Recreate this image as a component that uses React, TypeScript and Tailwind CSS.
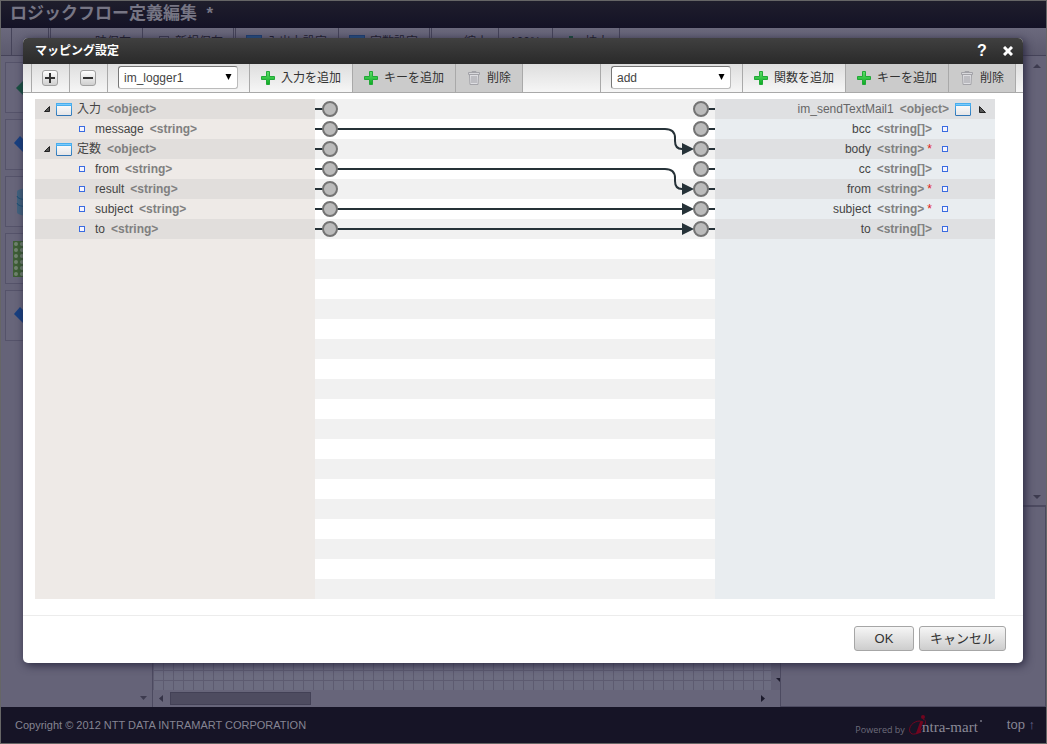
import type { ReactNode } from "react";

type Field = { name: string; type: string; object?: boolean; required?: boolean };

const inputs: Field[] = [
  { name: "入力", type: "<object>", object: true },
  { name: "message", type: "<string>" },
  { name: "定数", type: "<object>", object: true },
  { name: "from", type: "<string>" },
  { name: "result", type: "<string>" },
  { name: "subject", type: "<string>" },
  { name: "to", type: "<string>" },
];

const outputs: Field[] = [
  { name: "im_sendTextMail1", type: "<object>", object: true },
  { name: "bcc", type: "<string[]>" },
  { name: "body", type: "<string>", required: true },
  { name: "cc", type: "<string[]>" },
  { name: "from", type: "<string>", required: true },
  { name: "subject", type: "<string>", required: true },
  { name: "to", type: "<string[]>" },
];

const links = [
  { from: 1, to: 2 },
  { from: 3, to: 4 },
  { from: 5, to: 5 },
  { from: 6, to: 6 },
];

const rowY = (row: number) => row * 20 + 10;

function PlusIcon() {
  return (
    <svg width="14" height="14" viewBox="0 0 14 14" aria-hidden="true">
      <defs>
        <linearGradient id="plus" x1="0" y1="0" x2="0" y2="1">
          <stop offset="0" stopColor="#5fe06a" />
          <stop offset="1" stopColor="#0cab22" />
        </linearGradient>
      </defs>
      <path d="M5.5 .5h3v5h5v3h-5v5h-3v-5h-5v-3h5z" fill="url(#plus)" stroke="#22a838" />
    </svg>
  );
}

function TrashIcon() {
  return (
    <svg width="14" height="14" viewBox="-1 0 14 14" fill="none" stroke="#a3a3a8" aria-hidden="true">
      <path d="M4 1.500V.5h4v1" />
      <path d="M.5 1.500h11v2H.5z" fill="#d8d8dc" />
      <path d="M1.500 4l.5 9.500h8l.5-9.500" fill="#dedee2" />
      <path d="M4 5v7M6 5v7M8 5v7" stroke="#9c9ca2" />
    </svg>
  );
}

function WindowIcon() {
  return (
    <svg width="16" height="13" viewBox="0 0 16 13" className="shrink-0" aria-hidden="true">
      <defs>
        <linearGradient id="pane" x1="0" y1="0" x2="0" y2="1">
          <stop offset="0" stopColor="#ffffff" />
          <stop offset="1" stopColor="#e4e4e6" />
        </linearGradient>
        <linearGradient id="frame" x1="0" y1="0" x2="0" y2="1">
          <stop offset="0" stopColor="#4db4f2" />
          <stop offset="1" stopColor="#2f74b5" />
        </linearGradient>
      </defs>
      <rect x=".5" y=".5" width="15" height="12" rx=".5" fill="url(#pane)" stroke="url(#frame)" />
      <path d="M0 0h16v3H0z" fill="#48aeef" />
      <path d="M1 1.500h14" stroke="#7ccbfa" />
    </svg>
  );
}

function SquareButton({ label, plus }: { label: string; plus?: boolean }) {
  return (
    <div className="flex w-[38px] items-center justify-center border-l border-[#a9a9a9] pr-[2px]">
      <button
        aria-label={label}
        className="flex size-4 items-center justify-center rounded-[3px] border border-[#a0a0a0] bg-linear-to-b from-white to-[#cfcfcf]"
      >
        <svg width="12" height="12" viewBox="0 0 12 12" stroke="#333" strokeWidth="2" aria-hidden="true">
          <path d={plus ? "M1 6h10M6 1v10" : "M1 6h10"} />
        </svg>
      </button>
    </div>
  );
}

function ToolButton({ icon, children, disabled }: { icon: ReactNode; children: ReactNode; disabled?: boolean }) {
  return (
    <button
      disabled={disabled}
      className="flex items-center gap-[6px] border-l border-[#a9a9a9] px-[11px] text-xs text-[#333] disabled:bg-[#cbcbcb]"
    >
      {icon}
      {children}
    </button>
  );
}

function ToolSelect({ label, value }: { label: string; value: string }) {
  return (
    <div className="flex w-[142px] items-start border-l border-[#a9a9a9] pt-[2px] pl-[10px]">
      <div className="relative">
        <select
          aria-label={label}
          defaultValue={value}
          className="block h-[23px] w-[120px] appearance-none rounded-[3px] border border-[#bbb] border-t-[#777] border-l-[#777] bg-white px-[5px] text-xs text-[#444]"
        >
          <option>{value}</option>
        </select>
        <svg
          className="pointer-events-none absolute top-2 right-[6px]"
          width="7"
          height="6"
          viewBox="0 0 7 6"
          aria-hidden="true"
        >
          <path d="M.5 0h6L3.500 6z" fill="#000" />
        </svg>
      </div>
    </div>
  );
}

function Marker() {
  return <span className="size-[6px] shrink-0 border border-[#3a6be0] bg-[#f4f4ff]" />;
}

function InputRow({ field }: { field: Field }) {
  return (
    <li className="flex h-5 items-center odd:bg-[#e1dedc]">
      {field.object ? (
        <span className="flex w-[42px] items-center gap-[6px] pl-[9px]">
          <svg width="6" height="6" viewBox="0 0 6 6" aria-hidden="true">
            <path d="M.5 5.500h5v-5z" fill="#555" stroke="#222" />
          </svg>
          <WindowIcon />
        </span>
      ) : (
        <span className="flex w-[60px] pl-11">
          <Marker />
        </span>
      )}
      <span>{field.name}</span>
      <span className="pl-[6px] font-bold text-[#808080]">{field.type}</span>
    </li>
  );
}

function OutputRow({ field }: { field: Field }) {
  return (
    <li className="flex h-5 items-center justify-end odd:bg-[#dfe0e2]">
      <span className={field.object ? "text-[#666]" : ""}>{field.name}</span>
      <span className="pl-[6px] font-bold text-[#808080]">{field.type}</span>
      {field.required && <span className="pl-[3px] text-[#e02020]">*</span>}
      {field.object ? (
        <span className="flex items-center gap-2 pr-[9px] pl-[6px]">
          <WindowIcon />
          <svg width="7" height="7" viewBox="0 0 7 7" aria-hidden="true">
            <path d="M.5 .5v6h6z" fill="#555" stroke="#222" />
          </svg>
        </span>
      ) : (
        <span className="flex pr-[47px] pl-[10px]">
          <Marker />
        </span>
      )}
    </li>
  );
}

function Connections() {
  return (
    <svg className="block w-full" height="140" stroke="#263238" strokeWidth="2" fill="none" aria-hidden="true">
      {links.map(({ from }) => (
        <line key={from} x1="15" x2="87%" y1={rowY(from)} y2={rowY(from)} />
      ))}
      {inputs.map((_, row) => (
        <g key={row}>
          <path d={`M0 ${rowY(row)}h8`} />
          <circle cx="15" cy={rowY(row)} r="7" fill="#bbb" stroke="#747474" />
        </g>
      ))}
      <svg x="100%" y="0" overflow="visible">
        {links.map(({ from, to }) => {
          const a = rowY(from);
          const b = rowY(to);
          const bend = a === b ? "H-25" : `H-50Q-40 ${a} -40 ${a + 9}V${b - 8}Q-40 ${b} -33 ${b}H-25`;
          return (
            <g key={from}>
              <path d={`M-60 ${a}${bend}`} />
              <path d={`M-33 ${b - 6}L-21 ${b}L-33 ${b + 6}z`} fill="#263238" stroke="none" />
            </g>
          );
        })}
        {outputs.map((_, row) => (
          <g key={row}>
            <path d={`M-7 ${rowY(row)}H0`} />
            <circle cx="-14" cy={rowY(row)} r="7" fill="#bbb" stroke="#747474" />
          </g>
        ))}
      </svg>
    </svg>
  );
}

function MappingDialog() {
  return (
    <section
      role="dialog"
      aria-labelledby="mapping-title"
      className="overflow-hidden rounded-[5px] bg-white shadow-[2px_2px_10px_#29273f]"
    >
      <header className="flex h-[26px] items-center bg-linear-to-b from-[#404040] to-[#2a2a2a] pr-[7px] pl-3 text-white">
        <h2 id="mapping-title" className="flex-1 pb-px text-xs font-bold">
          マッピング設定
        </h2>
        <button aria-label="ヘルプ" className="w-5 text-base font-bold">
          ?
        </button>
        <button aria-label="閉じる" className="ml-2 flex w-4 justify-center">
          <svg width="10" height="10" viewBox="0 0 10 10" stroke="#fff" strokeWidth="3" aria-hidden="true">
            <path d="M1 1l8 8M9 1l-8 8" />
          </svg>
        </button>
      </header>
      <div className="flex h-[29px] justify-between border-b border-[#a9a9a9] bg-linear-to-b from-[#dedede] to-[#f6f6f6] pr-[7px] pl-2">
        <div className="flex">
          <SquareButton label="すべて展開" plus />
          <SquareButton label="すべて折りたたむ" />
          <ToolSelect label="入力" value="im_logger1" />
          <ToolButton icon={<PlusIcon />}>入力を追加</ToolButton>
          <ToolButton icon={<PlusIcon />} disabled>
            キーを追加
          </ToolButton>
          <ToolButton icon={<TrashIcon />} disabled>
            削除
          </ToolButton>
          <span className="border-l border-[#a9a9a9]" />
        </div>
        <div className="flex">
          <ToolSelect label="関数" value="add" />
          <ToolButton icon={<PlusIcon />}>関数を追加</ToolButton>
          <ToolButton icon={<PlusIcon />} disabled>
            キーを追加
          </ToolButton>
          <ToolButton icon={<TrashIcon />} disabled>
            削除
          </ToolButton>
          <span className="border-l border-[#a9a9a9]" />
        </div>
      </div>
      <div className="grid min-h-[500px] grid-cols-[7fr_10fr_7fr] pt-[6px] pr-7 pb-4 pl-3 text-xs text-[#444]">
        <ul className="bg-[#eeeae7]">
          {inputs.map((field) => (
            <InputRow key={field.name} field={field} />
          ))}
        </ul>
        <div className="h-[500px] bg-[repeating-linear-gradient(#f1f1f1_0_20px,#fff_20px_40px)]">
          <Connections />
        </div>
        <ul className="bg-[#e9edf0]">
          {outputs.map((field) => (
            <OutputRow key={field.name} field={field} />
          ))}
        </ul>
      </div>
      <footer className="flex h-12 items-start justify-end gap-[5px] border-t border-[#ececec] pt-[10px] pr-[17px] text-[13px] text-[#333]">
        <button className="h-[25px] w-[60px] rounded-[3px] border border-[#a6a6a6] bg-linear-to-b from-[#f6f6f6] to-[#cdcdcd]">
          OK
        </button>
        <button className="h-[25px] w-[87px] rounded-[3px] border border-[#a6a6a6] bg-linear-to-b from-[#f6f6f6] to-[#cdcdcd]">
          キャンセル
        </button>
      </footer>
    </section>
  );
}

function BackTool({ className, label, icon }: { className: string; label?: string; icon?: ReactNode }) {
  return (
    <div className={`flex items-center border-l border-[#454359] ${className}`}>
      {icon}
      {label}
    </div>
  );
}

function BlueBox() {
  return <span className="mr-[5px] h-[13px] w-4 border border-[#1d3f72] bg-[#245083]" />;
}

function GroupEnd() {
  return <span className="w-[2px] border-l border-[#454359]" />;
}

function PaletteTile({ children }: { children: ReactNode }) {
  return (
    <div className="flex h-[51px] w-[51px] items-center justify-center border border-[#55536a] bg-[#67657a]">
      <svg width="36" height="38" viewBox="0 0 36 38" aria-hidden="true">
        {children}
      </svg>
    </div>
  );
}

function Backdrop() {
  return (
    <div className="flex min-h-screen flex-col border border-[#666] bg-[#656378] text-[#8f8e99]">
      <header className="flex h-[27px] items-center bg-linear-to-b from-[#1f1e2c] to-[#141226] pl-[9px]">
        <h1 className="pb-[2px] text-[17px] font-bold text-[#767584]">ロジックフロー定義編集&nbsp; *</h1>
      </header>
      <div className="flex h-7 border-b border-[#454359] bg-linear-to-b from-[#6b697d] to-[#5c5a6e] pl-[10px] text-xs text-[#1c1a2c]">
        <BackTool className="w-[37px]" />
        <GroupEnd />
        <BackTool className="w-[92px] pl-8" label="一時保存" />
        <BackTool
          className="w-[91px] pl-4"
          label="新規保存"
          icon={<span className="mr-[6px] h-3 w-[10px] border border-[#3b3950]" />}
        />
        <GroupEnd />
        <BackTool className="w-[103px] pl-[10px]" label="入出力設定" icon={<BlueBox />} />
        <BackTool className="w-[91px] pl-[10px]" label="定数設定" icon={<BlueBox />} />
        <GroupEnd />
        <BackTool className="w-[67px] pl-8" label="縮小" />
        <BackTool className="w-[54px] pl-[11px]" label="100%" />
        <BackTool
          className="w-[67px] pl-4"
          label="拡大"
          icon={<span className="mr-[12px] h-3 w-1 bg-[#174b3b]" />}
        />
        <span className="border-l border-[#454359]" />
      </div>
      <div className="flex flex-1">
        <aside className="flex w-[152px] items-end justify-between border-r border-[#4c4a60] pl-1">
          <div className="flex flex-col gap-[6px] self-start pt-[6px]">
            <PaletteTile>
              <path d="M3 19L16 6l13 13-13 13z" fill="#17503f" />
            </PaletteTile>
            <PaletteTile>
              <path d="M1 17l6-7 20 20-7 6z" fill="#173f80" />
            </PaletteTile>
            <PaletteTile>
              <path d="M4 9v20c0 5 22 5 22 0V9c0-5-22-5-22 0" fill="#41627e" />
              <path d="M4 13c0 5 22 5 22 0M4 20c0 5 22 5 22 0" stroke="#194f74" fill="none" />
            </PaletteTile>
            <PaletteTile>
              <path d="M0 1h36v36H0z" fill="#3d5e34" />
              <path
                d="M3 4h30M3 10h30M3 16h30M3 22h30M3 28h30M3 34h30"
                stroke="#71836f"
                strokeWidth="4"
                strokeLinecap="round"
                strokeDasharray="0 6"
              />
            </PaletteTile>
            <PaletteTile>
              <path d="M1 17l6-7 20 20-7 6z" fill="#173f80" />
            </PaletteTile>
          </div>
          <svg width="7" height="4" viewBox="0 0 7 4" className="mr-[5px] mb-[7px]" aria-hidden="true">
            <path d="M0 0h7L3.500 4z" fill="#3d3b4f" />
          </svg>
        </aside>
        <main className="flex flex-1 flex-col">
          <div className="flex flex-1">
            <div className="flex-1 bg-[#6c6c80] bg-[linear-gradient(#5d5b70_1px,transparent_1px),linear-gradient(90deg,#5d5b70_1px,transparent_1px)] bg-size-[10px_10px] bg-position-[0_4px]" />
            <div className="flex w-[9px] items-end bg-[#626075] pb-2">
              <svg width="9" height="4" viewBox="0 0 9 4" aria-hidden="true">
                <path d="M5 0h4v4z" fill="#1c1a2c" />
              </svg>
            </div>
          </div>
          <div className="flex h-[17px] items-center bg-[#67657a] pr-[15px] pl-[6px]">
            <svg width="4" height="7" viewBox="0 0 4 7" aria-hidden="true">
              <path d="M4 0v7L0 3.500z" fill="#353347" />
            </svg>
            <div className="ml-[7px] h-[13px] w-[141px] border border-[#434156] bg-[#4e4c60]" />
            <svg width="4" height="7" viewBox="0 0 4 7" className="ml-auto" aria-hidden="true">
              <path d="M0 0v7l4-3.500z" fill="#1c1a2c" />
            </svg>
          </div>
        </main>
        <aside className="flex w-[266px] flex-col border-l border-[#4c4a60]">
          <div className="flex h-[451px] flex-col items-end justify-between border-b-2 border-[#4c4a60] pt-2 pr-[5px] pb-[6px]">
            <svg width="8" height="4" viewBox="0 0 8 4" aria-hidden="true">
              <path d="M0 4h8L4 0z" fill="#3d3b4f" />
            </svg>
            <svg width="8" height="4" viewBox="0 0 8 4" aria-hidden="true">
              <path d="M0 0h8L4 4z" fill="#3d3b4f" />
            </svg>
          </div>
          <div className="flex-1 border-r border-b border-[#4c4a60]" />
        </aside>
      </div>
      <footer className="flex h-9 items-center bg-[#161426] pr-[11px] pl-[14px] text-[11px] text-[#858492]">
        <span className="flex-1">Copyright © 2012 NTT DATA INTRAMART CORPORATION</span>
        <span className="pt-[10px] font-['Open_Sans'] text-[9px] text-[#6d6c7b]">Powered by</span>
        <svg width="76" height="24" viewBox="0 0 76 24" className="ml-1" role="img" aria-label="intra-mart">
          <path
            d="M11 8C4 8-1 14 1 19c2 4 8 2 12-3 4-4 5-9 1-10"
            fill="none"
            stroke="#72051f"
            strokeWidth="1"
          />
          <path d="M13 8L9 19l3-1" fill="none" stroke="#72051f" strokeWidth="3" />
          <circle cx="14" cy="4" r="2" fill="#72051f" />
          <text x="13" y="19" fontFamily="Liberation Serif, serif" fontSize="15" fill="#8a8996">
            ntra-mart
          </text>
          <circle cx="72" cy="8" r="1" fill="#777684" />
        </svg>
        <a href="#top" className="ml-[22px] text-[13px]">
          top <span className="text-[#6b6a91]">↑</span>
        </a>
      </footer>
    </div>
  );
}

export default function App() {
  return (
    <div id="top" className="relative font-['Liberation_Sans','Noto_Sans_CJK_JP',sans-serif]">
      <Backdrop />
      <div className="absolute inset-0 pt-[38px] pr-6 pl-[23px]">
        <MappingDialog />
      </div>
    </div>
  );
}
